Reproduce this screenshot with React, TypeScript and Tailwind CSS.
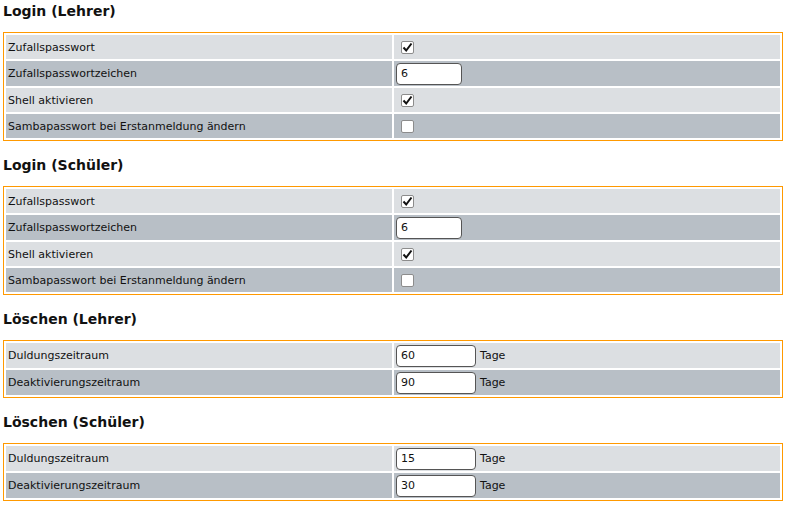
import React from 'react';

type Field =
  | { label: string; kind: 'check'; checked: boolean }
  | { label: string; kind: 'input'; value: string; width: string; unit?: string };

type Section = { title: string; fields: Field[] };

const loginFields = (): Field[] => [
  { label: 'Zufallspasswort', kind: 'check', checked: true },
  { label: 'Zufallspasswortzeichen', kind: 'input', value: '6', width: 'w-[66px]' },
  { label: 'Shell aktivieren', kind: 'check', checked: true },
  { label: 'Sambapasswort bei Erstanmeldung ändern', kind: 'check', checked: false },
];

const sections: Section[] = [
  { title: 'Login (Lehrer)', fields: loginFields() },
  { title: 'Login (Schüler)', fields: loginFields() },
  {
    title: 'Löschen (Lehrer)',
    fields: [
      { label: 'Duldungszeitraum', kind: 'input', value: '60', width: 'w-[80px]', unit: 'Tage' },
      { label: 'Deaktivierungszeitraum', kind: 'input', value: '90', width: 'w-[80px]', unit: 'Tage' },
    ],
  },
  {
    title: 'Löschen (Schüler)',
    fields: [
      { label: 'Duldungszeitraum', kind: 'input', value: '15', width: 'w-[80px]', unit: 'Tage' },
      { label: 'Deaktivierungszeitraum', kind: 'input', value: '30', width: 'w-[80px]', unit: 'Tage' },
    ],
  },
];

const CheckBox: React.FC<{ checked: boolean }> = ({ checked }) => (
  <span className="ml-[5px] flex h-[13px] w-[13px] items-center justify-center rounded-[2px] border border-[#8c8c8c] bg-white">
    {checked && (
      <svg width="11" height="11" viewBox="0 0 11 11">
        <path d="M1.5 5.5 L4.2 8.5 L9.5 1.5" fill="none" stroke="#111" strokeWidth="2" />
      </svg>
    )}
  </span>
);

const App: React.FC = () => {
  return (
    <div className="min-h-[510px] bg-white pl-[3px] pr-[5px] pt-[3px] font-['DejaVu_Sans',sans-serif] text-[#111]">
      {sections.map((section, si) => (
        <div key={section.title} className={si > 0 ? 'mt-[16px]' : ''}>
          <h3 className="mb-[13px] text-[14px] font-bold leading-[16px]">{section.title}</h3>

          {/* Settings table */}
          <div className="flex flex-col gap-[2px] border border-[#ff9900] p-[2px]">
            {section.fields.map((field, i) => (
              <div
                key={field.label}
                className={`grid grid-cols-2 gap-[2px] text-[11px] ${
                  i % 2 === 0 ? 'bg-[#dcdfe2]' : 'bg-[#b8bfc6]'
                }`}
              >
                <div
                  className={`flex items-center px-[2px] pt-[2px] ${
                    field.kind === 'input' ? 'h-[25px]' : 'h-[24px]'
                  }`}
                >
                  {field.label}
                </div>
                <div className="relative flex items-center px-[2px]">
                  <span className="absolute -left-[2px] top-0 h-full w-[2px] bg-white" />
                  {field.kind === 'check' ? (
                    <CheckBox checked={field.checked} />
                  ) : (
                    <>
                      <div
                        className={`flex h-[22px] items-center rounded-[4px] border border-[#555] bg-white px-[4px] pt-[2px] ${field.width}`}
                      >
                        {field.value}
                      </div>
                      {field.unit && <span className="ml-[4px] pt-[2px]">{field.unit}</span>}
                    </>
                  )}
                </div>
              </div>
            ))}
          </div>
        </div>
      ))}
    </div>
  );
};

export default App;
